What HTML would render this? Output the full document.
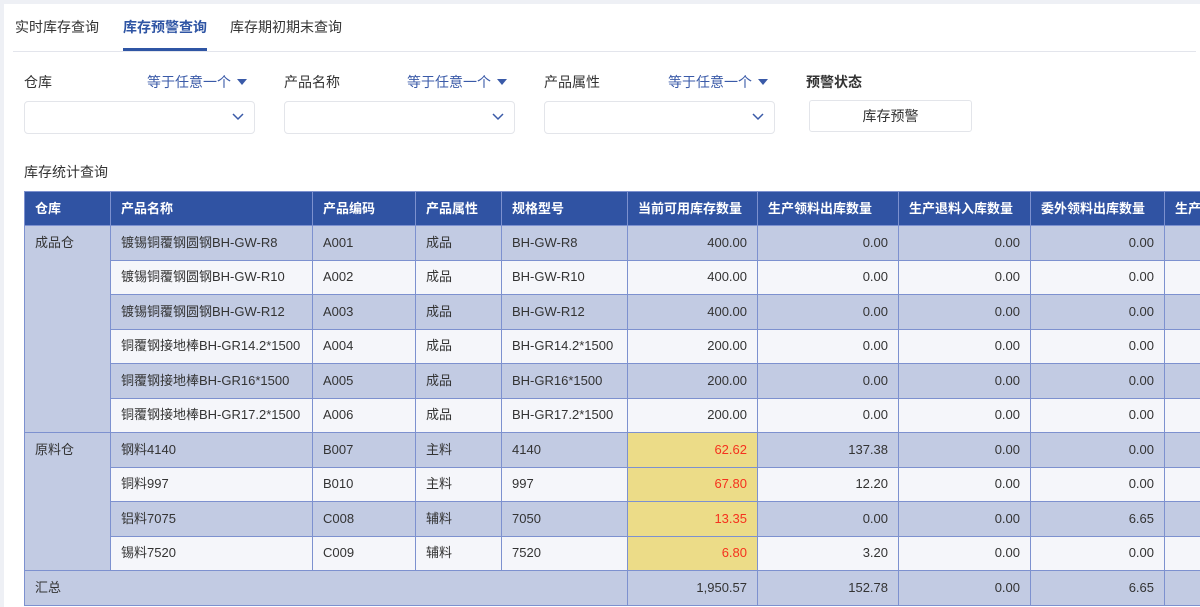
<!DOCTYPE html>
<html><head><meta charset="utf-8"><style>
*{box-sizing:border-box;margin:0;padding:0}
body{width:1200px;height:607px;overflow:hidden;background:#eef0f5;font-family:"Liberation Sans","Noto Sans CJK SC",sans-serif;color:#333;font-size:13px;position:relative}
.panel{position:absolute;left:4px;top:4px;width:1196px;height:603px;background:#fff}
.abs{position:absolute;white-space:nowrap;line-height:20px}
.tab{font-size:14px;top:17px;color:#333}
.lbl{font-size:14px;top:72px;color:#333}
.op{font-size:14px;top:72px;color:#3a5aa8}
.op:after{content:"";display:inline-block;margin-left:6px;border-left:5px solid transparent;border-right:5px solid transparent;border-top:6px solid #3a5aa8;vertical-align:2px}
.sel{top:101px;height:33px;width:231px;border:1px solid #e3e5ea;border-radius:4px}
.sel svg{position:absolute;right:10px;top:11px}
.wrap{position:absolute;left:24px;top:191px;width:1176px;height:416px;overflow:hidden}
table{border-collapse:collapse;table-layout:fixed;width:1200px}
td,th{border:1px solid #7d91cf;height:34.5px;padding:0 10px;white-space:nowrap;overflow:hidden;font-weight:normal;text-align:left;font-size:13px;line-height:18px;vertical-align:middle}
th{background:#3053a3;color:#fff;font-weight:bold;height:34px}
tr.a td{background:#c2cbe3}
tr.b td{background:#f5f6fa}
td.w{background:#c2cbe3!important;vertical-align:top;padding-top:8px}
td.n{text-align:right}
td.y{background:#ecdc88!important;color:#f5321e;text-align:right}
</style></head><body>
<div class="panel"></div>
<div class="abs tab" style="left:15px">实时库存查询</div>
<div class="abs tab" style="left:123px;color:#2f55a4;font-weight:bold">库存预警查询</div>
<div class="abs" style="left:123px;top:48px;width:84px;height:3px;background:#2f55a4"></div>
<div class="abs tab" style="left:230px">库存期初期末查询</div>
<div class="abs" style="left:13px;top:51px;width:1183px;height:1px;background:#e3e5ec"></div>

<div class="abs lbl" style="left:24px">仓库</div>
<div class="abs op" style="left:147px">等于任意一个</div>
<div class="abs sel" style="left:24px"><svg width="12" height="8"><path d="M1 1L6 6L11 1" stroke="#3a5aa8" stroke-width="1.5" fill="none"/></svg></div>
<div class="abs lbl" style="left:284px">产品名称</div>
<div class="abs op" style="left:407px">等于任意一个</div>
<div class="abs sel" style="left:284px"><svg width="12" height="8"><path d="M1 1L6 6L11 1" stroke="#3a5aa8" stroke-width="1.5" fill="none"/></svg></div>
<div class="abs lbl" style="left:544px">产品属性</div>
<div class="abs op" style="left:668px">等于任意一个</div>
<div class="abs sel" style="left:544px"><svg width="12" height="8"><path d="M1 1L6 6L11 1" stroke="#3a5aa8" stroke-width="1.5" fill="none"/></svg></div>
<div class="abs lbl" style="left:806px;font-weight:bold">预警状态</div>
<div class="abs" style="left:809px;top:100px;width:163px;height:32px;border:1px solid #e3e5ea;border-radius:3px;text-align:center;line-height:30px;font-size:14px">库存预警</div>
<div class="abs" style="left:24px;top:162px;font-size:14px">库存统计查询</div>

<div class="wrap"><table>
<colgroup><col style="width:86px"><col style="width:202px"><col style="width:103px"><col style="width:86px"><col style="width:126px"><col style="width:130px"><col style="width:141px"><col style="width:132px"><col style="width:134px"><col style="width:60px"></colgroup>
<tr><th>仓库</th><th>产品名称</th><th>产品编码</th><th>产品属性</th><th>规格型号</th><th>当前可用库存数量</th><th>生产领料出库数量</th><th>生产退料入库数量</th><th>委外领料出库数量</th><th>生产</th></tr>
<tr class="a"><td class="w" rowspan="6">成品仓</td><td>镀锡铜覆钢圆钢BH-GW-R8</td><td>A001</td><td>成品</td><td>BH-GW-R8</td><td class="n">400.00</td><td class="n">0.00</td><td class="n">0.00</td><td class="n">0.00</td><td></td></tr>
<tr class="b"><td>镀锡铜覆钢圆钢BH-GW-R10</td><td>A002</td><td>成品</td><td>BH-GW-R10</td><td class="n">400.00</td><td class="n">0.00</td><td class="n">0.00</td><td class="n">0.00</td><td></td></tr>
<tr class="a"><td>镀锡铜覆钢圆钢BH-GW-R12</td><td>A003</td><td>成品</td><td>BH-GW-R12</td><td class="n">400.00</td><td class="n">0.00</td><td class="n">0.00</td><td class="n">0.00</td><td></td></tr>
<tr class="b"><td>铜覆钢接地棒BH-GR14.2*1500</td><td>A004</td><td>成品</td><td>BH-GR14.2*1500</td><td class="n">200.00</td><td class="n">0.00</td><td class="n">0.00</td><td class="n">0.00</td><td></td></tr>
<tr class="a"><td>铜覆钢接地棒BH-GR16*1500</td><td>A005</td><td>成品</td><td>BH-GR16*1500</td><td class="n">200.00</td><td class="n">0.00</td><td class="n">0.00</td><td class="n">0.00</td><td></td></tr>
<tr class="b"><td>铜覆钢接地棒BH-GR17.2*1500</td><td>A006</td><td>成品</td><td>BH-GR17.2*1500</td><td class="n">200.00</td><td class="n">0.00</td><td class="n">0.00</td><td class="n">0.00</td><td></td></tr>
<tr class="a"><td class="w" rowspan="4">原料仓</td><td>钢料4140</td><td>B007</td><td>主料</td><td>4140</td><td class="y">62.62</td><td class="n">137.38</td><td class="n">0.00</td><td class="n">0.00</td><td></td></tr>
<tr class="b"><td>铜料997</td><td>B010</td><td>主料</td><td>997</td><td class="y">67.80</td><td class="n">12.20</td><td class="n">0.00</td><td class="n">0.00</td><td></td></tr>
<tr class="a"><td>铝料7075</td><td>C008</td><td>辅料</td><td>7050</td><td class="y">13.35</td><td class="n">0.00</td><td class="n">0.00</td><td class="n">6.65</td><td></td></tr>
<tr class="b"><td>锡料7520</td><td>C009</td><td>辅料</td><td>7520</td><td class="y">6.80</td><td class="n">3.20</td><td class="n">0.00</td><td class="n">0.00</td><td></td></tr>
<tr class="a"><td colspan="5">汇总</td><td class="n">1,950.57</td><td class="n">152.78</td><td class="n">0.00</td><td class="n">6.65</td><td></td></tr>
</table></div>
</body></html>
